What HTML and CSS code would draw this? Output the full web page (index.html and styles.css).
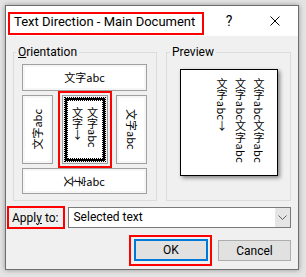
FILE: index.html
```html
<!DOCTYPE html>
<html lang="en">

<head>
    <meta charset="UTF-8">
    <meta name="viewport" content="width=device-width, initial-scale=1.0">
    <title>Text Direction - Main Document</title>
    <link rel="stylesheet" href="styles.css">
</head>

<body>
    <div class="dialog">
        <div class="titlebar">
            <span class="title">Text Direction - Main Document</span>
            <span class="tb-btn help">?</span>
            <span class="tb-btn close">
                <svg width="10" height="10" viewBox="0 0 10 10">
                    <path d="M0.5 0.5 L9.5 9.5 M9.5 0.5 L0.5 9.5" stroke="#000" stroke-width="1" fill="none" />
                </svg>
            </span>
        </div>

        <div class="client">
            <div class="groups">
                <fieldset class="group orient">
                    <legend><u>O</u>rientation</legend>
                    <div class="orient-body">
                        <div class="opt opt-h"><span class="sample">文字abc</span></div>
                        <div class="opt-row">
                            <div class="opt opt-v opt-up"><span class="sample">文字abc</span></div>
                            <div class="sel-wrap">
                                <div class="opt-sel">
                                    <div class="sel-inner">
                                        <div class="sel-core">
                                            <span class="sample stacked">文字abc<br>文字<span class="arrow">↓</span></span>
                                        </div>
                                    </div>
                                </div>
                            </div>
                            <div class="opt opt-v opt-down"><span class="sample">文字abc</span></div>
                        </div>
                        <div class="opt opt-h opt-bottom">
                            <span class="sample"><span class="rot">文</span><span class="rot">字</span>abc</span>
                        </div>
                    </div>
                </fieldset>

                <fieldset class="group preview">
                    <legend>Preview</legend>
                    <div class="preview-box">
                        <div class="preview-text">文字abc文字abc<br>文字abc文字abc<br>文字abc<span class="arrow">↓</span></div>
                    </div>
                </fieldset>
            </div>

            <div class="apply-row">
                <label class="apply-label"><span>Appl<u>y</u> to:</span></label>
                <div class="combo">
                    <span class="combo-text">Selected text</span>
                    <span class="combo-arrow">
                        <svg width="9" height="5" viewBox="0 0 9 5">
                            <polyline points="0.5,0.5 4.5,4.5 8.5,0.5" stroke="#606060" stroke-width="1" fill="none" />
                        </svg>
                    </span>
                </div>
            </div>

            <div class="button-row">
                <div class="ok-wrap"><button class="btn btn-default">OK</button></div>
                <button class="btn">Cancel</button>
            </div>
        </div>
    </div>
</body>

</html>
```

FILE: styles.css
```css
body {
    margin: 0;
    padding: 5px;
    background-color: #e4e4e4;
    font-family: Roboto, "Noto Sans", sans-serif;
    color: #000;
}

.dialog {
    width: 294px;
    height: 265px;
    box-sizing: border-box;
    border: 1px solid #6e6e6e;
    background-color: #f0f0f0;
    box-shadow: 0 0 5px rgba(0, 0, 0, 0.35);
    display: flex;
    flex-direction: column;
}

/* title bar */
.titlebar {
    height: 30px;
    flex: none;
    background-color: #fff;
    display: flex;
    align-items: center;
}

.title {
    align-self: flex-end;
    margin: 0 0 1px 2px;
    width: 196px;
    box-sizing: border-box;
    border: 2px solid #f00;
    padding: 0 0 3px 4px;
    font-size: 13px;
    line-height: 16px;
    white-space: nowrap;
}

.tb-btn {
    width: 46px;
    height: 30px;
    display: flex;
    align-items: center;
    justify-content: center;
    font-size: 14px;
}

.help {
    margin-left: auto;
}

/* body */
.client {
    flex: 1;
    padding: 8px 7px 0;
    display: flex;
    flex-direction: column;
}

.groups {
    display: flex;
    gap: 9px;
}

.group {
    margin: 0;
    padding: 0;
    min-width: 0;
    border: 1px solid #dcdcdc;
}

.group legend {
    font-size: 12px;
    line-height: 16px;
    padding: 0 2px;
    margin-left: 2px;
}

.orient {
    width: 144px;
    box-sizing: border-box;
}

.orient-body {
    margin: 4px 9px 6px 8px;
    display: flex;
    flex-direction: column;
    gap: 4px;
}

.opt {
    background-color: #fff;
    border: 1px solid #a0a0a0;
    box-shadow: inset 0 0 0 2px #f6f6f6;
    box-sizing: border-box;
    display: flex;
    align-items: center;
    justify-content: center;
}

.opt-h {
    height: 27px;
}

.opt-bottom {
    height: 26px;
}

.opt-row {
    height: 69px;
    display: flex;
    justify-content: space-between;
    align-items: center;
}

.opt-v {
    width: 31px;
    height: 69px;
}

.sample {
    font-family: "Noto Sans CJK SC", sans-serif;
    font-size: 11px;
    line-height: 1;
}

.opt-v .sample {
    writing-mode: vertical-rl;
    text-orientation: sideways;
}

.opt-up .sample {
    transform: rotate(180deg);
}

.rot {
    display: inline-block;
    transform: rotate(90deg);
}

.sel-wrap {
    border: 2px solid #f00;
    padding: 2px;
    margin: -4px 0;
}

.opt-sel {
    width: 46px;
    height: 69px;
    box-sizing: border-box;
    border: 1px solid #a0a0a0;
    padding: 1px;
    background-color: #f0f0f0;
}

.sel-inner {
    height: 100%;
    box-sizing: border-box;
    border: 1px dotted #000;
}

.sel-core {
    height: 100%;
    box-sizing: border-box;
    border: 2px solid #000;
    outline: 1px dotted #000;
    outline-offset: -3px;
    background-color: #fff;
    display: flex;
    justify-content: center;
    align-items: flex-start;
    padding-top: 7px;
}

.stacked {
    writing-mode: vertical-rl;
    line-height: 15px;
}

.arrow {
    text-orientation: upright;
}

.preview legend {
    margin-left: 3px;
}

.preview {
    flex: 1;
}

.preview-box {
    margin: 9px 0 0 13px;
    width: 98px;
    height: 107px;
    box-sizing: border-box;
    border: 1px solid #000;
    background-color: #fff;
    box-shadow: 2px 2px 4px rgba(0, 0, 0, 0.45);
    display: flex;
    justify-content: flex-end;
    padding: 8px 9px 0 0;
}

.preview-text {
    writing-mode: vertical-rl;
    font-family: "Noto Sans CJK SC", sans-serif;
    font-size: 11px;
    line-height: 18.5px;
    letter-spacing: 0.4px;
}

/* apply to */
.apply-row {
    display: flex;
    align-items: center;
    margin-top: 5px;
}

.apply-label {
    margin-left: -6px;
    height: 23px;
    box-sizing: border-box;
    border: 2px solid #f00;
    padding: 0 5px 0 3px;
    font-size: 12px;
    display: flex;
    align-items: center;
    white-space: nowrap;
}

.combo {
    margin-left: 3px;
    flex: 1;
    height: 21px;
    box-sizing: border-box;
    border: 1px solid #7a7a7a;
    background-color: #fff;
    display: flex;
}

.combo-text {
    flex: 1;
    padding-left: 4px;
    font-size: 12px;
    line-height: 19px;
}

.combo-arrow {
    width: 15px;
    background-color: #e5e5e5;
    display: flex;
    align-items: center;
    justify-content: center;
}

/* buttons */
.button-row {
    display: flex;
    justify-content: flex-end;
    align-items: center;
    gap: 6px;
    margin-top: 6px;
}

.ok-wrap {
    border: 2px solid #f00;
    padding: 2px 2px 3px 3px;
    display: flex;
}

.btn {
    width: 73px;
    height: 21px;
    padding: 0;
    font-family: Roboto, "Noto Sans", sans-serif;
    font-size: 12px;
    color: #000;
    background-color: #e1e1e1;
    border: 1px solid #adadad;
}

.btn-default {
    width: 74px;
    height: 22px;
    border: 2px solid #0078d7;
}
```
